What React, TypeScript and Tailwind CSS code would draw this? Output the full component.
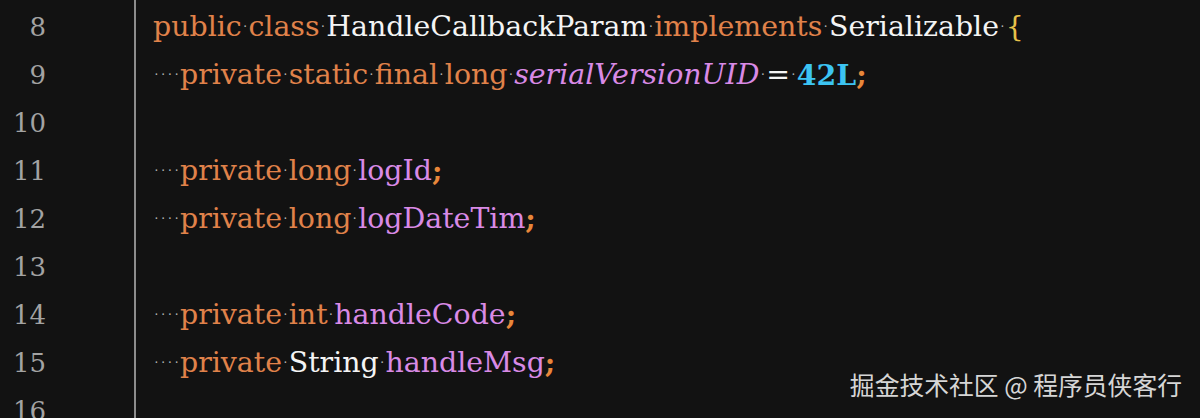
import React from 'react'

type Tok = [string, string]

const OR = 'text-[#e0824a]'
const WH = 'text-[#f4f4f4]'
const PU = 'text-[#d98ae6]'
const SEMI = 'text-[#e8873a] font-bold'

const lines: { n: number; indent?: boolean; toks: Tok[] }[] = [
  {
    n: 8,
    toks: [
      ['public', OR], [' ', ''], ['class', OR], [' ', ''], ['HandleCallbackParam', WH], [' ', ''],
      ['implements', OR], [' ', ''], ['Serializable', WH], [' ', ''], ['{', 'text-[#e8c14a]'],
    ],
  },
  {
    n: 9,
    indent: true,
    toks: [
      ['private', OR], [' ', ''], ['static', OR], [' ', ''], ['final', OR], [' ', ''], ['long', OR], [' ', ''],
      ['serialVersionUID', PU + ' italic'], [' ', ''], ['=', WH], [' ', ''], ['42L', 'text-[#3cc4f2] font-bold'], [';', SEMI],
    ],
  },
  { n: 10, toks: [] },
  {
    n: 11,
    indent: true,
    toks: [['private', OR], [' ', ''], ['long', OR], [' ', ''], ['logId', PU], [';', SEMI]],
  },
  {
    n: 12,
    indent: true,
    toks: [['private', OR], [' ', ''], ['long', OR], [' ', ''], ['logDateTim', PU], [';', SEMI]],
  },
  { n: 13, toks: [] },
  {
    n: 14,
    indent: true,
    toks: [['private', OR], [' ', ''], ['int', OR], [' ', ''], ['handleCode', PU], [';', SEMI]],
  },
  {
    n: 15,
    indent: true,
    toks: [['private', OR], [' ', ''], ['String', WH], [' ', ''], ['handleMsg', PU], [';', SEMI]],
  },
  { n: 16, toks: [] },
]

// rendered whitespace: narrow cell holding a small middle dot
function Dot() {
  return (
    <span className="flex h-[10px] w-[6.75px] items-center justify-center text-[12px] leading-none text-[#b8b8b8]">
      ·
    </span>
  )
}

export default function App() {
  return (
    <div
      className="relative h-[418px] w-[1200px] overflow-hidden bg-[#121212]"
      style={{ fontFamily: '"DejaVu Serif", serif' }}
    >
      <div className="flex">
        <div className="w-[136px] border-r-2 border-[#8c8c8c] pt-[3px] pb-[40px]">
          {lines.map((l) => (
            <div key={l.n} className="flex h-[48px] w-[46px] items-center justify-end text-[26px] text-[#a3a3a3]">
              {l.n}
            </div>
          ))}
        </div>
        <div className="pt-[3px] pl-[17px] text-[28.4px]">
          {lines.map((l) => (
            <div key={l.n} className="flex h-[48px] items-center whitespace-pre">
              {l.indent && (
                <>
                  <Dot />
                  <Dot />
                  <Dot />
                  <Dot />
                </>
              )}
              {l.toks.map((t, i) => (t[0] === ' ' ? <Dot key={i} /> : <span key={i} className={t[1]}>{t[0]}</span>))}
            </div>
          ))}
        </div>
      </div>
      <div
        className="absolute right-[18px] bottom-[15px] text-[24.8px] text-[#d6d6d6]"
        style={{ fontFamily: '"Noto Sans CJK SC", sans-serif' }}
      >
        掘金技术社区 @ 程序员侠客行
      </div>
    </div>
  )
}
